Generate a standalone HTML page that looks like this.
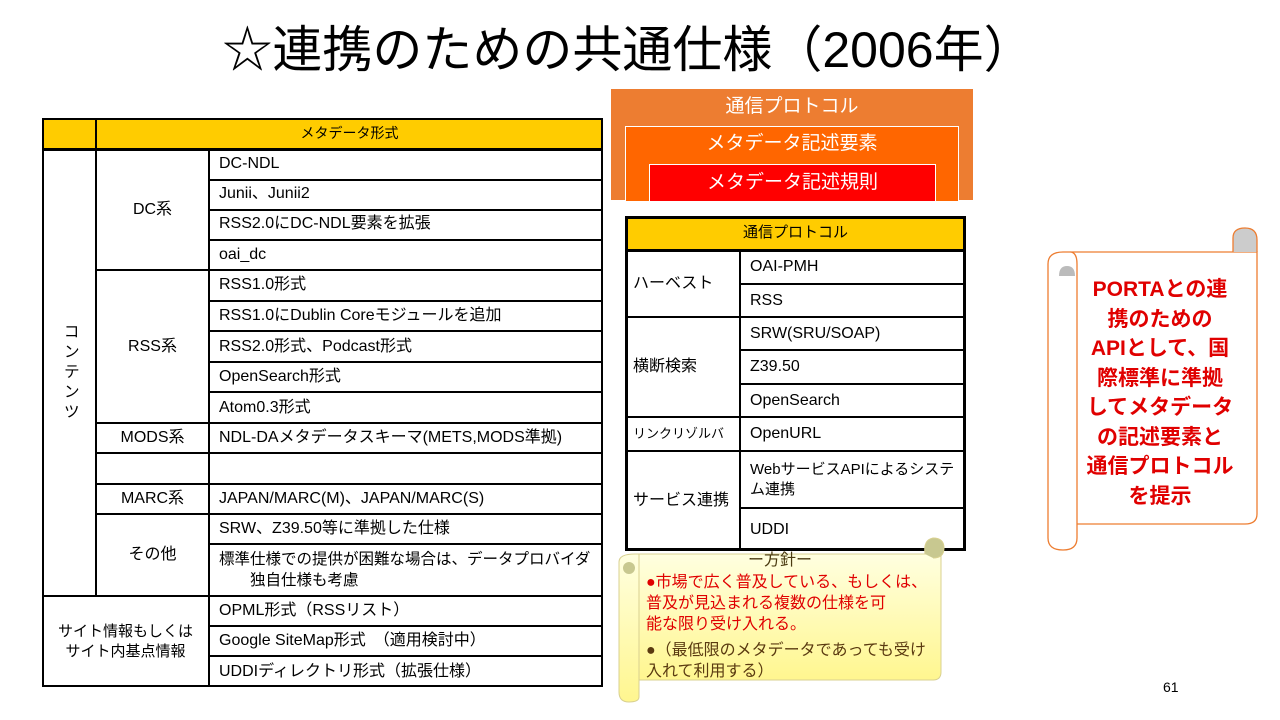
<!DOCTYPE html>
<html><head><meta charset="utf-8"><style>
*{margin:0;padding:0;box-sizing:border-box}
body{width:1280px;height:720px;background:#fff;position:relative;overflow:hidden;font-family:"Liberation Sans","Noto Sans CJK JP",sans-serif;color:#000}
.a{position:absolute}
.c{position:absolute;display:flex;align-items:center;font-size:16px;line-height:1.1;white-space:nowrap}
.ctr{justify-content:center;text-align:center}
.l{padding-left:10px}
.h{position:absolute;height:2px;background:#000}
.v{position:absolute;width:2px;background:#000}
</style></head><body>
<div class="a" style="left:8px;top:18px;width:1240px;text-align:center;font-size:50px;line-height:64px">☆連携のための共通仕様（2006年）</div>

<!-- left table -->
<div class="a" style="left:42px;top:118px;width:561px;height:31px;background:#FFCC00"></div>
<div class="c ctr" style="left:96px;top:118px;width:507px;height:31px;font-size:14px">メタデータ形式</div>
<div class="a" style="left:42px;top:118px;width:561px;height:569px;border:2px solid #000"></div>
<div class="h" style="left:42px;top:148px;width:561px;height:3px"></div>
<div class="v" style="left:95px;top:118px;height:478px"></div>
<div class="v" style="left:208px;top:149px;height:538px"></div>
<div class="h" style="left:209px;top:179px;width:394px"></div>
<div class="h" style="left:209px;top:209px;width:394px"></div>
<div class="h" style="left:209px;top:239px;width:394px"></div>
<div class="h" style="left:96px;top:269px;width:507px"></div>
<div class="h" style="left:209px;top:300px;width:394px"></div>
<div class="h" style="left:209px;top:330px;width:394px"></div>
<div class="h" style="left:209px;top:361px;width:394px"></div>
<div class="h" style="left:209px;top:391px;width:394px"></div>
<div class="h" style="left:96px;top:422px;width:507px"></div>
<div class="h" style="left:96px;top:452px;width:507px"></div>
<div class="h" style="left:96px;top:483px;width:507px"></div>
<div class="h" style="left:96px;top:513px;width:507px"></div>
<div class="h" style="left:209px;top:543px;width:394px"></div>
<div class="h" style="left:42px;top:595px;width:561px"></div>
<div class="h" style="left:209px;top:625px;width:394px"></div>
<div class="h" style="left:209px;top:655px;width:394px"></div>

<div class="c ctr" style="left:42px;top:149px;width:54px;height:447px;writing-mode:vertical-rl;font-size:16px;letter-spacing:4px">コンテンツ</div>
<div class="c ctr" style="left:96px;top:149px;width:113px;height:121px">DC系</div>
<div class="c ctr" style="left:96px;top:270px;width:113px;height:153px">RSS系</div>
<div class="c ctr" style="left:96px;top:423px;width:113px;height:30px">MODS系</div>
<div class="c ctr" style="left:96px;top:484px;width:113px;height:30px">MARC系</div>
<div class="c ctr" style="left:96px;top:514px;width:113px;height:82px">その他</div>
<div class="c ctr" style="left:42px;top:596px;width:167px;height:91px;font-size:15px;line-height:20px">サイト情報もしくは<br>サイト内基点情報</div>

<div class="c l" style="left:209px;top:149px;height:30px">DC-NDL</div>
<div class="c l" style="left:209px;top:179px;height:30px">Junii、Junii2</div>
<div class="c l" style="left:209px;top:209px;height:30px">RSS2.0にDC-NDL要素を拡張</div>
<div class="c l" style="left:209px;top:240px;height:30px">oai_dc</div>
<div class="c l" style="left:209px;top:270px;height:30px">RSS1.0形式</div>
<div class="c l" style="left:209px;top:300px;height:31px">RSS1.0にDublin Coreモジュールを追加</div>
<div class="c l" style="left:209px;top:331px;height:31px">RSS2.0形式、Podcast形式</div>
<div class="c l" style="left:209px;top:362px;height:30px">OpenSearch形式</div>
<div class="c l" style="left:209px;top:392px;height:31px">Atom0.3形式</div>
<div class="c l" style="left:209px;top:423px;height:30px">NDL-DAメタデータスキーマ(METS,MODS準拠)</div>
<div class="c l" style="left:209px;top:484px;height:30px">JAPAN/MARC(M)、JAPAN/MARC(S)</div>
<div class="c l" style="left:209px;top:514px;height:30px">SRW、Z39.50等に準拠した仕様</div>
<div class="c l" style="left:209px;top:544px;height:52px;line-height:21px;font-size:15.5px">標準仕様での提供が困難な場合は、データプロバイダ<br>&emsp;&emsp;独自仕様も考慮</div>
<div class="c l" style="left:209px;top:596px;height:30px">OPML形式（RSSリスト）</div>
<div class="c l" style="left:209px;top:626px;height:30px">Google SiteMap形式　（適用検討中）</div>
<div class="c l" style="left:209px;top:656px;height:31px">UDDIディレクトリ形式（拡張仕様）</div>

<!-- nested boxes -->
<div class="a" style="left:611px;top:89px;width:362px;height:111px;background:#ED7D31"></div>
<div class="c ctr" style="left:611px;top:92px;width:362px;height:30px;color:#fff;font-size:19px">通信プロトコル</div>
<div class="a" style="left:625px;top:126px;width:334px;height:80px;background:#FF6600;border:1px solid #fff"></div>
<div class="c ctr" style="left:625px;top:128px;width:334px;height:32px;color:#fff;font-size:19px">メタデータ記述要素</div>
<div class="a" style="left:649px;top:164px;width:287px;height:42px;background:#FF0000;border:1px solid #fff"></div>
<div class="c ctr" style="left:649px;top:166px;width:287px;height:34px;color:#fff;font-size:19px">メタデータ記述規則</div>
<div class="a" style="left:606px;top:201px;width:374px;height:14px;background:#fff"></div>

<!-- right table -->
<div class="a" style="left:625px;top:216px;width:341px;height:34px;background:#FFCC00"></div>
<div class="c ctr" style="left:625px;top:216px;width:341px;height:34px;font-size:15px">通信プロトコル</div>
<div class="a" style="left:625px;top:216px;width:341px;height:335px;border:3px solid #000"></div>
<div class="h" style="left:625px;top:249px;width:341px;height:3px"></div>
<div class="v" style="left:739px;top:250px;height:301px"></div>
<div class="h" style="left:740px;top:283px;width:226px"></div>
<div class="h" style="left:625px;top:316px;width:341px"></div>
<div class="h" style="left:740px;top:349px;width:226px"></div>
<div class="h" style="left:740px;top:383px;width:226px"></div>
<div class="h" style="left:625px;top:416px;width:341px"></div>
<div class="h" style="left:625px;top:450px;width:341px"></div>
<div class="h" style="left:740px;top:507px;width:226px"></div>
<div class="c l" style="left:625px;top:250px;height:67px;padding-left:8px">ハーベスト</div>
<div class="c l" style="left:625px;top:317px;height:100px;padding-left:8px">横断検索</div>
<div class="c l" style="left:625px;top:417px;height:34px;padding-left:8px;font-size:13px">リンクリゾルバ</div>
<div class="c l" style="left:625px;top:451px;height:100px;padding-left:8px">サービス連携</div>
<div class="c l" style="left:740px;top:250px;height:34px">OAI-PMH</div>
<div class="c l" style="left:740px;top:284px;height:33px">RSS</div>
<div class="c l" style="left:740px;top:317px;height:33px">SRW(SRU/SOAP)</div>
<div class="c l" style="left:740px;top:350px;height:34px">Z39.50</div>
<div class="c l" style="left:740px;top:384px;height:33px">OpenSearch</div>
<div class="c l" style="left:740px;top:417px;height:34px">OpenURL</div>
<div class="c l" style="left:740px;top:451px;height:57px;line-height:20px;font-size:15px">WebサービスAPIによるシステ<br>ム連携</div>
<div class="c l" style="left:740px;top:508px;height:43px">UDDI</div>

<!-- policy scroll -->
<svg class="a" style="left:615px;top:532px" width="332" height="172">
<defs><linearGradient id="g" x1="0" x2="0" y1="0" y2="1"><stop offset="0" stop-color="#FFFFE0"/><stop offset="1" stop-color="#FFF68F"/></linearGradient></defs>
<path d="M20 22 H326 V140 Q326 148 318 148 H20 Z" fill="url(#g)" stroke="#D8D090"/>
<path d="M4 30 Q4 22 20 22 H24 V165 Q24 170 14 170 Q4 170 4 160 Z" fill="url(#g)" stroke="#D8D090"/>
<circle cx="14" cy="36" r="6" fill="#C8C890"/>
<path d="M310 22 Q308 8 318 6 Q329 6 329 16 Q329 26 318 26" fill="#C8C890" stroke="#D8D090"/>
</svg>
<div class="a" style="left:620px;top:551px;width:320px;text-align:center;font-size:16px;color:#4a3a10;line-height:20px">ー方針ー</div>
<div class="a" style="left:646px;top:572px;width:300px;font-size:16px;line-height:21px;color:#E00000;white-space:nowrap">●市場で広く普及している、もしくは、<br>普及が見込まれる複数の仕様を可<br>能な限り受け入れる。</div>
<div class="a" style="left:646px;top:640px;width:300px;font-size:16px;line-height:21px;color:#5a3a10;white-space:nowrap">●（最低限のメタデータであっても受け<br>入れて利用する）</div>

<!-- right scroll -->
<svg class="a" style="left:1045px;top:226px" width="215" height="330">
<path d="M25 26 H212 V288 Q212 298 200 298 H30" fill="#fff" stroke="#ED7D31" stroke-width="1.3"/>
<path d="M3 38 Q3 26 18 26 H25 Q32 26 32 38 V312 Q32 324 18 324 Q3 324 3 312 Z" fill="#fff" stroke="#ED7D31" stroke-width="1.3"/>
<path d="M14 50 Q14 40 22 40 Q30 40 30 50 Z" fill="#bbb"/>
<path d="M188 26 V12 Q188 2 200 2 Q212 2 212 14 V26" fill="#ccc" stroke="#ED7D31" stroke-width="1.3"/>
</svg>
<div class="a" style="left:1070px;top:275px;width:180px;text-align:center;font-size:21px;line-height:29.5px;color:#E00000;font-weight:bold;white-space:nowrap">PORTAとの連<br>携のための<br>APIとして、国<br>際標準に準拠<br>してメタデータ<br>の記述要素と<br>通信プロトコル<br>を提示</div>

<div class="a" style="left:1163px;top:679px;font-size:14px">61</div>
</body></html>
